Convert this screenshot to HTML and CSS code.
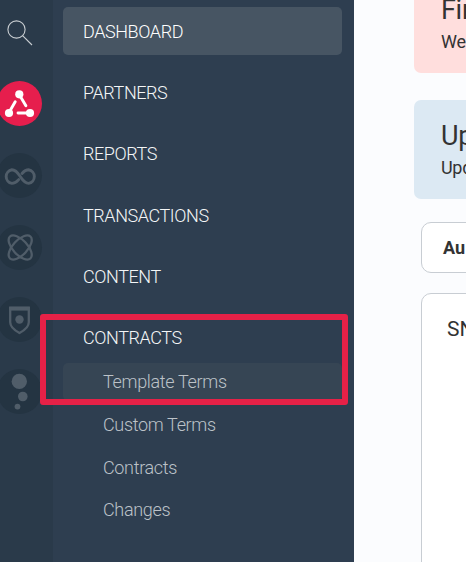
FILE: index.html
```
<!DOCTYPE html>
<html lang="en">
<head>
    <meta charset="UTF-8">
    <meta name="viewport" content="width=device-width, initial-scale=1.0">
    <title>Dashboard</title>
    <link rel="stylesheet" href="styles.css">
</head>
<body>

    <div class="app">
        <!-- Product rail -->
        <div class="rail">
            <svg class="search" width="26" height="26" viewBox="0 0 26 26">
                <circle cx="9.5" cy="9.5" r="8.6"/>
                <path d="M15.6 15.6L25 25"/>
            </svg>

            <a class="product active">
                <svg width="45" height="45" viewBox="0 0 45 45">
                    <g class="fill">
                        <circle cx="22.3" cy="13.3" r="4.1"/>
                        <circle cx="12" cy="32" r="4.1"/>
                        <circle cx="33" cy="32" r="4.1"/>
                    </g>
                    <path class="line" d="M22.5 14L28.9 24.8M12.3 31L18.2 20.8M33 32H21"/>
                </svg>
            </a>
            <a class="product">
                <svg width="45" height="45" viewBox="0 0 45 45">
                    <path class="line" d="M21.7 26.6C19.4 29.2 17.6 30.4 14.9 30.4A6.9 6.9 0 0 1 14.9 16.8C23 16.8 23.5 30.4 31.6 30.4A6.9 6.9 0 0 0 31.6 16.8C29 16.8 27 18.2 25 20.4"/>
                </svg>
            </a>
            <a class="product">
                <svg width="45" height="45" viewBox="0 0 45 45">
                    <ellipse class="line thin" cx="23.2" cy="22.5" rx="15" ry="7.3" transform="rotate(47 23.2 22.5)"/>
                    <ellipse class="line thin" cx="23.2" cy="22.5" rx="15" ry="7.3" transform="rotate(-47 23.2 22.5)"/>
                </svg>
            </a>
            <a class="product">
                <svg width="45" height="45" viewBox="0 0 45 45">
                    <path class="line thin" d="M13.2 10.8H31.8V25.3C31.8 30.5 26.3 34 22.5 36C18.7 34 13.2 30.5 13.2 25.3Z"/>
                    <path class="line bar" d="M12.2 11.6H32.8"/>
                    <circle class="fill" cx="22.5" cy="22.5" r="4.2"/>
                </svg>
            </a>
            <a class="product">
                <svg width="45" height="45" viewBox="0 0 45 45">
                    <g class="fill">
                        <circle cx="22.3" cy="12.4" r="7.7"/>
                        <circle cx="25.8" cy="27.5" r="4.8"/>
                        <circle cx="20.5" cy="37.6" r="2.9"/>
                    </g>
                </svg>
            </a>
        </div>

        <!-- Navigation -->
        <div class="sidebar">
            <a class="nav-item selected">DASHBOARD</a>
            <a class="nav-item">PARTNERS</a>
            <a class="nav-item">REPORTS</a>
            <a class="nav-item">TRANSACTIONS</a>
            <a class="nav-item">CONTENT</a>
            <a class="nav-item parent">CONTRACTS</a>
            <div class="subnav">
                <a class="sub-item hovered">Template Terms</a>
                <a class="sub-item">Custom Terms</a>
                <a class="sub-item">Contracts</a>
                <a class="sub-item">Changes</a>
            </div>
        </div>

        <!-- Page content -->
        <div class="main">
            <div class="notice error">
                <h2>Fin</h2>
                <p>We</p>
            </div>
            <div class="notice info">
                <h2>Up</h2>
                <p>Upd</p>
            </div>
            <div class="card filter">Au</div>
            <div class="card chart">SN</div>
        </div>

        <div class="highlight"></div>
    </div>

</body>
</html>
```
FILE: styles.css
```
* {
    box-sizing: border-box;
}

body {
    margin: 0;
    font-family: Roboto, sans-serif;
    background-color: #fbfcfe;
    overflow: hidden;
}

.app {
    position: relative;
    display: flex;
    width: 466px;
    height: 562px;
    overflow: hidden;
}

.rail {
    display: flex;
    flex-direction: column;
    flex: none;
    width: 53px;
    padding-top: 20px;
    background-color: #2a3a4a;
}

.search {
    flex: none;
    margin: 0 0 35px 7px;
    fill: none;
    stroke: #c8cdd1;
    stroke-width: 1.1;
}

.product {
    flex: none;
    width: 45px;
    height: 45px;
    margin: 0 0 27px -3px;
    border-radius: 50%;
    background-color: #243442;
    color: #505d69;
}

.product svg {
    display: block;
}

.product.active {
    background-color: #e61e4d;
    color: #fff;
}

.fill {
    fill: currentColor;
}

.line {
    fill: none;
    stroke: currentColor;
    stroke-width: 2.9;
    stroke-linecap: round;
}

.line.thin {
    stroke-width: 2.3;
}

.line.bar {
    stroke-width: 4;
    stroke-linecap: butt;
}

.sidebar {
    flex: none;
    width: 301px;
    padding: 7px 12px 0 10px;
    background-color: #2e3e50;
}

.nav-item {
    display: block;
    height: 48px;
    margin-bottom: 13.2px;
    padding-left: 20px;
    border-radius: 5px;
    font-size: 18px;
    font-weight: 300;
    line-height: 49px;
    letter-spacing: -0.42px;
    color: #f4f6f7;
}

.nav-item.selected {
    background-color: #475563;
    color: #fff;
}

.nav-item.parent {
    margin-bottom: 2px;
}

.sub-item {
    display: block;
    height: 38px;
    margin-bottom: 4.8px;
    padding-left: 40px;
    border-radius: 5px;
    font-size: 18px;
    font-weight: 300;
    line-height: 38px;
    letter-spacing: -0.33px;
    color: #bcc2c8;
}

.sub-item.hovered {
    background-color: #364554;
}

.main {
    flex: 1;
    min-width: 0;
    padding-left: 60px;
    overflow: hidden;
    color: #333;
    white-space: nowrap;
}

.notice {
    width: 300px;
    height: 99px;
    margin-bottom: 27px;
    padding: 19px 27px;
    border-radius: 7px;
}

.notice.error {
    margin-top: -26px;
    background-color: #ffdedd;
}

.notice.info {
    background-color: #dce9f3;
}

.notice h2 {
    margin: 0;
    font-size: 27px;
    font-weight: 400;
    line-height: 34px;
    letter-spacing: -0.3px;
}

.notice p {
    margin: 0;
    font-size: 18px;
    line-height: 30px;
    letter-spacing: -0.3px;
}

.card {
    width: 300px;
    margin-left: 7px;
    border: 1px solid #c8cdd3;
    border-radius: 10px;
    background-color: #fff;
}

.card.filter {
    height: 51px;
    margin-top: -4px;
    padding-left: 21px;
    font-size: 18px;
    font-weight: 700;
    line-height: 49px;
}

.card.chart {
    height: 300px;
    margin-top: 20px;
    padding: 22px 25px;
    font-size: 21px;
    line-height: 26px;
}

/* Frame around the contracts entry */
.highlight {
    position: absolute;
    top: 314px;
    left: 40px;
    width: 308px;
    height: 91px;
    border: 6px solid #e62147;
    border-radius: 3px;
}
```
